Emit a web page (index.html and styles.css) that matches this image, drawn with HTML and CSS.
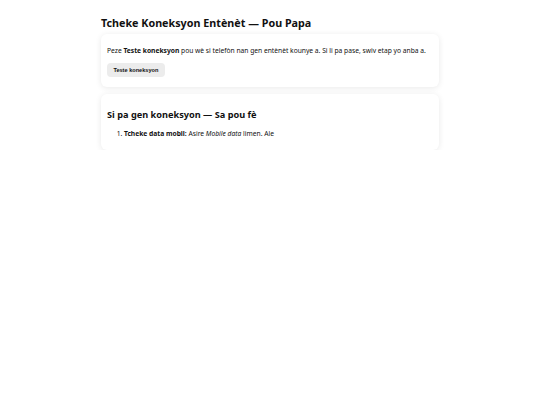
FILE: index.html
```html
<!DOCTYPE html>
<html lang="ht">
<head>
<meta charset="utf-8">
<title>Tcheke Koneksyon Entènèt</title>
<link rel="stylesheet" href="styles.css">
</head>
<body>
<main class="page">
  <h1 class="title">Tcheke Koneksyon Entènèt — Pou Papa</h1>
  <section class="card card-test">
    <p class="lead">Peze <strong>Teste koneksyon</strong> pou wè si telefòn nan gen entènèt kounye a. Si li pa pase, swiv etap yo anba a.</p>
    <button class="btn" type="button">Teste koneksyon</button>
  </section>
  <section class="card card-steps">
    <h2 class="subtitle">Si pa gen koneksyon — Sa pou fè</h2>
    <ol class="steps">
      <li><strong>Tcheke data mobil:</strong> Asire <em>Mobile data</em> limen. Ale</li>
    </ol>
  </section>
</main>
</body>
</html>
```

FILE: styles.css
```css
html, body {
  margin: 0;
  padding: 0;
  background: #ffffff;
}
body {
  font-family: "Noto Sans", "Open Sans", sans-serif;
  color: #111;
}
.page {
  width: 338px;
  margin: 0 auto;
  padding-top: 16px;
  display: flex;
  flex-direction: column;
}
.title {
  font-size: 10.75px;
  font-weight: 700;
  line-height: 14px;
  margin: 0 0 4px 0;
}
.card {
  background: #fff;
  border-radius: 6px;
  box-shadow: 0 1px 6px rgba(0, 0, 0, 0.09);
}
.card-test {
  padding: 12px 6px 10px;
  margin-bottom: 7px;
}
.lead {
  font-size: 6.7px;
  line-height: 10px;
  margin: 0 0 7px 0;
}
.btn {
  display: block;
  font-family: "Liberation Sans", Arial, sans-serif;
  font-size: 5.6px;
  font-weight: 700;
  color: #111;
  background: #ececec;
  border: none;
  border-radius: 4px;
  padding: 0 6.4px;
  height: 14px;
  line-height: 14px;
}
.card-steps {
  padding: 14px 6px 11px;
}
.subtitle {
  font-size: 9.2px;
  line-height: 13px;
  font-weight: 700;
  margin: 0 0 8px 0;
}
.steps {
  margin: 0;
  padding-left: 17px;
  font-size: 6.7px;
  line-height: 10px;
}
.steps li {
  margin: 0;
}
```
